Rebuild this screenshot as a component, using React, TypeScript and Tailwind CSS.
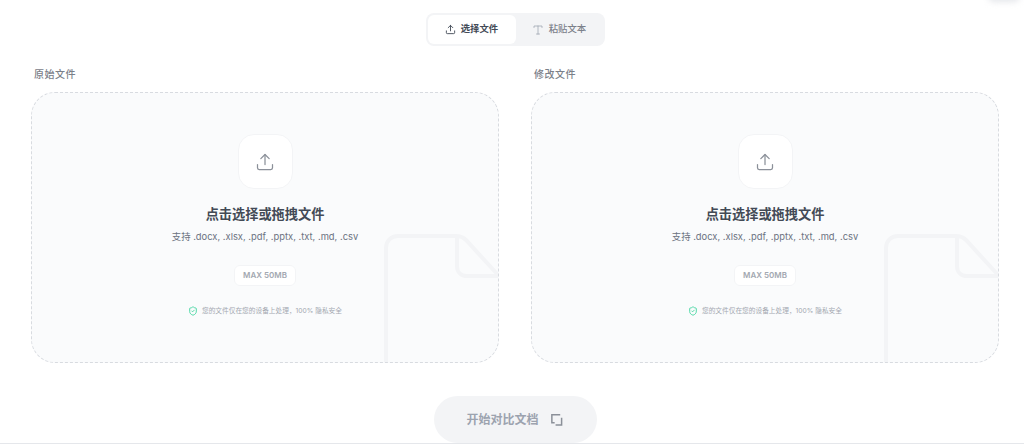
import React from "react";

function UploadIcon({ className }: { className: string }) {
  return (
    <svg viewBox="0 0 24 24" fill="none" stroke="currentColor" strokeLinecap="round" strokeLinejoin="round" className={className}>
      <path d="M12 15V3" />
      <path d="M7 8l5-5 5 5" />
      <path d="M21 15v4a2 2 0 0 1-2 2H5a2 2 0 0 1-2-2v-4" />
    </svg>
  );
}

function Panel({ label }: { label: string }) {
  return (
    <div className="flex flex-col w-[468px]">
      <div className="h-[15px] mb-[10px] text-[10px] leading-[15px] font-medium tracking-[0.5px] text-[#7b8089] pl-[3px]">{label}</div>
      <div className="relative h-[271px] rounded-[24px] border border-dashed border-[#d8dbe0] bg-[#fafbfc] overflow-hidden flex flex-col items-center">
        <svg viewBox="0 0 115 128" fill="none" className="absolute left-[352px] top-[141px] w-[115px] h-[128px] text-[#f3f4f6]" stroke="currentColor" strokeWidth="4">
          <path d="M2 128V14C2 7 7 2 14 2H72C76 2 79 3 82 6L115 42" />
          <path d="M73 2V32C73 38 77 42 83 42H115" />
        </svg>
        <div className="relative mt-[41px] w-[55px] h-[55px] rounded-[16px] bg-white border border-[#f3f4f6] flex items-center justify-center">
          <UploadIcon className="w-[20px] h-[20px] text-[#8b9099] stroke-[1.5]" />
        </div>
        <div className="relative mt-[15px] text-[13.2px] leading-[20px] font-semibold text-[#434a56]">点击选择或拖拽文件</div>
        <div className="relative mt-[5px] text-[9.4px] leading-[16px] text-[#6b7280]">支持 .docx, .xlsx, .pdf, .pptx, .txt, .md, .csv</div>
        <div className="relative mt-[20px] h-[21px] w-[62px] rounded-[6px] bg-white border border-[#f3f4f6] text-[8px] leading-[19px] text-center font-semibold text-[#a3a8b1]">MAX 50MB</div>
        <div className="relative mt-[19px] flex items-center gap-[4px] text-[6.7px] leading-[12px] text-[#a3a8b1]">
          <svg viewBox="0 0 24 24" fill="none" stroke="#34d399" strokeWidth="2" strokeLinecap="round" strokeLinejoin="round" className="w-[10px] h-[10px]">
            <path d="M20 13c0 5-3.5 7.5-7.66 8.95a1 1 0 0 1-.67-.01C7.5 20.5 4 18 4 13V6a1 1 0 0 1 1-1c2 0 4.5-1.2 6.24-2.72a1.17 1.17 0 0 1 1.52 0C14.51 3.81 17 5 19 5a1 1 0 0 1 1 1z" />
            <path d="m9 12 2 2 4-4" />
          </svg>
          <span>您的文件仅在您的设备上处理，100% 隐私安全</span>
        </div>
      </div>
    </div>
  );
}

export default function App() {
  return (
    <div className="relative h-[444px] w-[1024px] overflow-hidden bg-white border-b border-[#e5e7eb] pl-[31px] pr-[25px] [font-family:Inter,'Noto_Sans_CJK_SC',sans-serif]">
      <div className="absolute right-[4px] top-[-10px] w-[32px] h-[12px] rounded-full bg-[#e5e7eb] blur-[3px]" />
      <div className="flex justify-center pt-[13px]">
        <div className="flex w-[179px] h-[33px] p-[2px] rounded-[8px] bg-[#f3f4f6]">
          <div className="w-[88px] rounded-[6px] bg-white flex items-center justify-center gap-[5px] text-[9.4px] font-semibold text-[#434a56]">
            <UploadIcon className="w-[11px] h-[11px] stroke-[2]" />
            <span>选择文件</span>
          </div>
          <div className="flex-1 flex items-center justify-center gap-[5px] text-[9.4px] font-medium text-[#7b8089]">
            <svg viewBox="0 0 24 24" fill="none" stroke="#9ca3af" strokeWidth="1.5" strokeLinecap="round" className="w-[12px] h-[12px]">
              <path d="M4 7V4h16v3M12 4v16M9 20h6" />
            </svg>
            <span>粘贴文本</span>
          </div>
        </div>
      </div>
      <div className="flex gap-[32px] mt-[21px]">
        <Panel label="原始文件" />
        <Panel label="修改文件" />
      </div>
      <div className="flex justify-center mt-[33px]">
        <div className="w-[163px] h-[47px] rounded-full bg-[#f3f4f6] flex items-center justify-center gap-[12px] text-[12px] font-semibold text-[#9ca3af]">
          <span>开始对比文档</span>
          <svg viewBox="0 0 14 14" fill="none" stroke="#8b9099" strokeWidth="1.6" className="w-[13px] h-[13px] -translate-x-[1px]">
            <path d="M11 2H2v8.5h3" />
            <path d="M12.5 5v8H6" />
          </svg>
        </div>
      </div>
    </div>
  );
}
